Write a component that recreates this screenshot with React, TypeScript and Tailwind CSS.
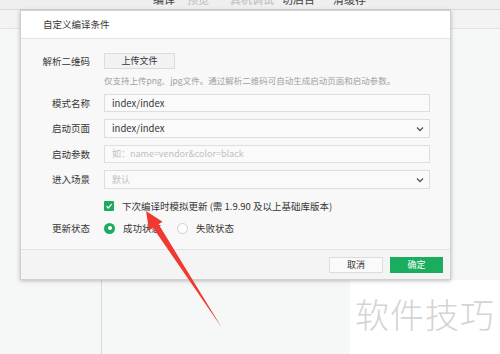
import React from "react";

const font = "font-['Noto_Sans_CJK_SC','Noto_Sans',sans-serif]";

const Chevron = () => (
  <svg width="8" height="6" viewBox="0 0 8 6" className="text-[#555]">
    <path d="M1 1.5 L4 4.5 L7 1.5" fill="none" stroke="currentColor" strokeWidth="1.3" />
  </svg>
);

const Row = ({ label, children }: { label: string; children: React.ReactNode }) => (
  <div className="flex items-center">
    <div className="w-[70px] pr-[1px] text-right text-[9.5px] text-[#353535]">{label}</div>
    <div className="ml-[13px] flex-1">{children}</div>
  </div>
);

const Arrow = () => (
  <svg className="pointer-events-none absolute left-0 top-0" width="500" height="354">
    <polygon
      points="146,211 162.5,221.7 158.6,224.2 222,328 153,227.7 149.1,230.5"
      fill="#ee3a32"
    />
  </svg>
);

export default function App() {
  return (
    <div className={`relative h-[354px] w-[500px] overflow-hidden bg-[#f6f7f7] ${font}`}>
      {/* toolbar, mostly cut off at the top */}
      <div className="h-[10px] overflow-hidden border-b border-[#d9d9d9] bg-[#efefef]">
        <div className="relative -top-[7px] flex text-[11px] leading-[12px]">
          <span className="ml-[153px] text-[#444]">编译</span>
          <span className="ml-[12px] text-[#bbb]">预览</span>
          <span className="ml-[21px] text-[#bbb]">真机调试</span>
          <span className="ml-[8px] text-[#444]">切后台</span>
          <span className="ml-[18px] text-[#444]">清缓存</span>
        </div>
      </div>
      <div className="h-[19px] border-b border-[#e2e2e2] bg-[#f3f3f3]" />
      <div className="flex h-[325px]">
        <div className="w-[102px] border-r border-[#dadada]" />
        <div className="flex-1" />
      </div>

      {/* watermark */}
      <div className="absolute left-[350px] top-[280px] flex h-[74px] w-[150px] items-start bg-white">
        <span className="ml-[5px] mt-[14px] text-[34px] font-light leading-[40px] tracking-[1px] text-[#d4d4d4]">软件技巧</span>
      </div>

      {/* dialog */}
      <div className="absolute left-[20px] top-[10px] flex h-[270px] w-[431px] flex-col border border-[#d0d0d0] bg-[#f8f8f8] shadow-[0_1px_4px_rgba(0,0,0,0.25)]">
        <div className="flex h-[28px] items-center border-b border-[#e3e3e3] bg-white pl-[22px] text-[9.5px] text-[#353535]">
          自定义编译条件
        </div>
        <div className="flex-1 pr-[20px] pt-[14px]">
          <Row label="解析二维码">
            <button className="flex h-[16px] w-[71px] items-center justify-center border border-[#dcdcdc] bg-[#f2f2f2] text-[9px] text-[#353535]">
              上传文件
            </button>
          </Row>
          <div className="ml-[83px] mt-[5px] text-[8.5px] leading-[12px] text-[#a0a0a0]">
            仅支持上传png、jpg文件。通过解析二维码可自动生成启动页面和启动参数。
          </div>
          <div className="mt-[8px] flex flex-col gap-[7px]">
            <Row label="模式名称">
              <div className="flex h-[18px] items-center border border-[#dedede] bg-[#fafafa] pl-[7px] text-[9.5px] text-[#353535]">
                index/index
              </div>
            </Row>
            <Row label="启动页面">
              <div className="flex h-[19px] items-center justify-between border border-[#dedede] bg-[#fafafa] pl-[7px] pr-[5px] text-[9.5px] text-[#353535]">
                index/index
                <Chevron />
              </div>
            </Row>
            <Row label="启动参数">
              <div className="flex h-[18px] items-center border border-[#dedede] bg-[#fafafa] pl-[7px] text-[9px] text-[#c0c0c0]">
                如：name=vendor&amp;color=black
              </div>
            </Row>
            <Row label="进入场景">
              <div className="flex h-[19px] items-center justify-between border border-[#dedede] bg-[#fafafa] pl-[7px] pr-[5px] text-[9px] text-[#c0c0c0]">
                默认
                <Chevron />
              </div>
            </Row>
          </div>
          <div className="ml-[83px] mt-[10px] flex items-center">
            <span className="flex h-[10px] w-[10px] items-center justify-center rounded-[1px] bg-[#1aad5f]">
              <svg width="8" height="8" viewBox="0 0 8 8">
                <path d="M1.5 4.2 L3.3 6 L6.6 2.2" fill="none" stroke="#fff" strokeWidth="1.2" />
              </svg>
            </span>
            <span className="ml-[8px] text-[9.5px] text-[#353535]">下次编译时模拟更新 (需 1.9.90 及以上基础库版本)</span>
          </div>
          <div className="mt-[8px]">
            <Row label="更新状态">
              <div className="flex items-center text-[9.5px] text-[#353535]">
                <span className="flex h-[11px] w-[11px] items-center justify-center rounded-full bg-[#1aad5f]">
                  <span className="h-[4px] w-[4px] rounded-full bg-white" />
                </span>
                <span className="ml-[8px]">成功状态</span>
                <span className="ml-[16px] h-[11px] w-[11px] rounded-full border border-[#d0d0d0] bg-white" />
                <span className="ml-[8px]">失败状态</span>
              </div>
            </Row>
          </div>
        </div>
        <div className="flex h-[30px] items-center justify-end gap-[7px] border-t border-[#e3e3e3] bg-[#f4f4f4] pr-[7px]">
          <button className="flex h-[16px] w-[54px] items-center justify-center border border-[#dcdcdc] bg-[#fafafa] text-[9px] text-[#353535]">
            取消
          </button>
          <button className="flex h-[16px] w-[53px] items-center justify-center bg-[#1aad5f] text-[9px] text-white">
            确定
          </button>
        </div>
      </div>

      <Arrow />
    </div>
  );
}
